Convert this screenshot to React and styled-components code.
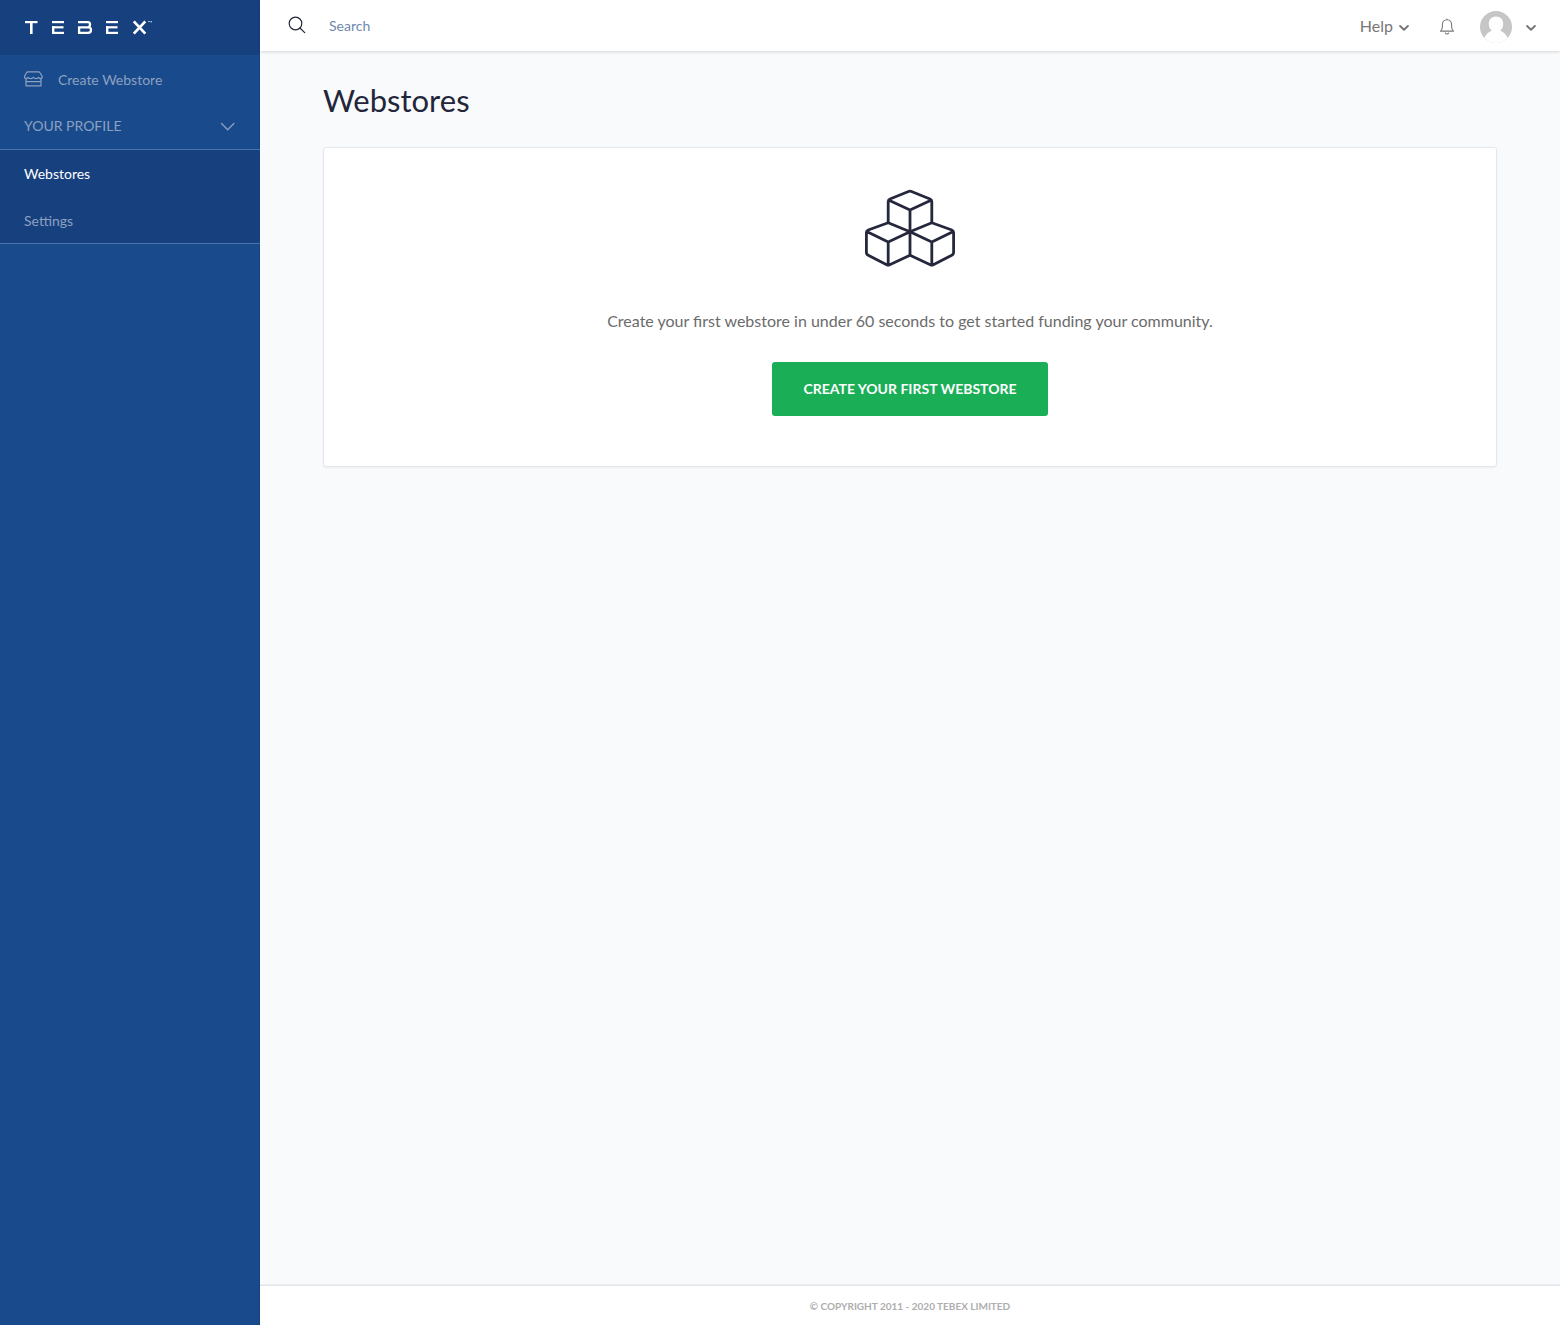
import React from "react";
import styled, { createGlobalStyle } from "styled-components";

const GlobalStyle = createGlobalStyle`
  *, *::before, *::after { box-sizing: border-box; }
  body {
    margin: 0;
    background: #f9fafc;
    color: #23263b;
    font-family: Lato, "Open Sans", sans-serif;
    font-size: 14px;
    line-height: 20px;
  }
  button, input { font: inherit; }
  svg { display: block; flex: none; }
`;

const Shell = styled.div`
  display: flex;
  min-height: 100vh;
`;

const Sidebar = styled.aside`
  flex: 0 0 260px;
  background: #194b8c;
  box-shadow: inset -1px 0 0 #17407f;
`;

const Brand = styled.a`
  display: flex;
  align-items: center;
  height: 55px;
  padding: 0 24px;
  background: #17407f;
`;

const SideLink = styled.a`
  display: flex;
  align-items: center;
  gap: 15px;
  height: ${(p) => (p.$primary ? 48 : 47)}px;
  padding: ${(p) => (p.$primary ? "2px 24px 0" : "0 24px")};
  color: ${(p) => (p.$active ? "#ffffff" : "#8ca0c0")};
  text-decoration: none;
`;

const GroupToggle = styled.button`
  display: flex;
  align-items: center;
  justify-content: space-between;
  width: 100%;
  height: 47px;
  padding: 0 24px;
  border: 0;
  border-bottom: 1px solid #4873aa;
  background: transparent;
  color: #8ca0c0;
  text-transform: uppercase;
  cursor: pointer;
`;

const SubMenu = styled.div`
  background: #17407f;
  box-shadow: inset 0 -1px 0 #4873aa;
`;

const Main = styled.div`
  display: flex;
  flex: 1;
  flex-direction: column;
  min-width: 0;
`;

const TopBar = styled.header`
  display: flex;
  align-items: center;
  justify-content: space-between;
  height: 51px;
  padding: 0 24px 0 28px;
  background: #ffffff;
  box-shadow: 0 1px 3px rgba(0, 0, 0, 0.15);
`;

const SearchForm = styled.form`
  display: flex;
  flex: 1;
  align-items: center;
  gap: 23px;
`;

const SearchInput = styled.input`
  flex: 1;
  min-width: 0;
  height: 50px;
  padding: 0;
  border: 0;
  outline: 0;
  background: transparent;
  color: #23263b;
  &::placeholder { color: #6e88ae; opacity: 1; }
`;

const Actions = styled.div`
  display: flex;
  align-items: center;
  padding-top: 2px;
`;

const ActionButton = styled.button`
  display: flex;
  align-items: center;
  gap: ${(p) => p.$gap || 0}px;
  padding: 0;
  margin-left: ${(p) => p.$space || 0}px;
  border: 0;
  background: transparent;
  color: #777777;
  font-size: 16px;
  line-height: 22px;
  cursor: pointer;
`;

const ActionLabel = styled.span`
  padding-bottom: 2px;
`;

const Content = styled.main`
  flex: 1;
  padding: 25px 63px 48px;
`;

const Title = styled.h1`
  margin: 0 0 23px;
  font-size: 31px;
  font-weight: 400;
  line-height: 48px;
`;

const Card = styled.section`
  display: flex;
  flex-direction: column;
  align-items: center;
  padding: 40px 24px 50px;
  border: 1px solid #e3e8ef;
  border-radius: 3px;
  background: #ffffff;
  box-shadow: 0 1px 2px rgba(0, 0, 0, 0.05);
`;

const Message = styled.p`
  margin: 41px 0 29px;
  color: #6b6b6b;
  font-size: 16px;
  line-height: 24px;
  text-align: center;
`;

const PrimaryButton = styled.button`
  padding: 17px 31px;
  border: 0;
  border-radius: 3px;
  background: #1aae57;
  color: #ffffff;
  font-weight: 700;
  text-transform: uppercase;
  cursor: pointer;
`;

const Footer = styled.footer`
  padding: 10px 24px 9px;
  border-top: 1px solid #e0e5eb;
  background: #ffffff;
  box-shadow: 0 -1px 1px rgba(0, 0, 0, 0.04);
  color: #adadad;
  font-size: 10px;
  font-weight: 700;
  text-align: center;
  text-transform: uppercase;
`;

const TebexLogo = () => (
  <svg width="130" height="15" viewBox="0 0 130 15" fill="#fff" role="img" aria-label="Tebex">
    <rect x="1" y="1" width="12.500" height="2.200" />
    <rect x="6" y="1" width="2.600" height="13" />
    {[28, 82].map((x) => (
      <g key={x}>
        <rect x={x} y="1" width="12" height="2.200" />
        <rect x={x} y="6.200" width="11.500" height="2.200" />
        <rect x={x} y="11.800" width="12" height="2.200" />
        <rect x={x} y="6.200" width="2.400" height="7.800" />
      </g>
    ))}
    <g fill="none" stroke="#fff" strokeWidth="2.300">
      <path d="M54 2.100H64Q66 2.100 66 4.500T64 7.300H55.100V12.900H64Q67 12.900 67 10T64 7.300" />
      <path strokeWidth="2.700" d="M109.800 1.300L121.300 13.700M121.300 1.300L109.800 13.700" />
    </g>
    <g fillOpacity=".6">
      <rect x="124" y="1" width="2" height="1" />
      <rect x="126.500" y="1" width="1.500" height="1.500" />
    </g>
  </svg>
);

const StoreIcon = () => (
  <svg width="19" height="18" viewBox="0 0 19 18" fill="none" stroke="currentColor" strokeWidth="1.200" strokeLinejoin="round" aria-hidden="true">
    <path d="M4 .8h10.500c.7 0 1.200.3 1.500.9l2.100 3.600c.4 1.300-.4 2.300-1.600 2.300-1.100 0-1.700-.6-2-1.300-.4.800-1.200 1.300-2.500 1.300-1.300 0-2.200-.5-2.700-1.300-.5.800-1.400 1.300-2.700 1.300-1.200 0-2.100-.5-2.500-1.300-.3.700-.9 1.300-1.900 1.300C1 7.600.2 6.600.6 5.300l1.900-3.600C2.800 1.100 3.300.8 4 .8z" />
    <path d="M2 7.600v7.200h15V7.600M2 10.600h15" />
  </svg>
);

const GroupChevron = () => (
  <svg width="16" height="9" viewBox="0 0 16 9" fill="none" stroke="currentColor" strokeWidth="1.300" strokeLinecap="round" strokeLinejoin="round" aria-hidden="true">
    <path d="M1.500 1.500L7.700 7.800l6.200-6.300" />
  </svg>
);

const MenuChevron = () => (
  <svg width="10" height="10" viewBox="0 0 10 10" fill="none" stroke="currentColor" strokeWidth="1.900" strokeLinecap="round" strokeLinejoin="round" aria-hidden="true">
    <path d="M1.100 4l3.900 3.800L8.900 4" />
  </svg>
);

const SearchIcon = () => (
  <svg width="18" height="20" viewBox="0 0 18 20" fill="none" stroke="#23263b" strokeWidth="1.200" strokeLinecap="round" aria-hidden="true">
    <circle cx="7.500" cy="7.500" r="6.300" />
    <path d="M12 12l4.700 4.600" />
  </svg>
);

const BellIcon = () => (
  <svg width="16" height="18" viewBox="0 0 16 18" fill="none" stroke="currentColor" strokeWidth="1.100" strokeLinecap="round" strokeLinejoin="round" aria-hidden="true">
    <path d="M8 1.700V1M1.500 13.100c1.300-1 1.900-2.200 1.900-4.300V6.600c0-2.900 1.800-4.900 4.600-4.900s4.600 2 4.600 4.900v2.200c0 2.100.6 3.300 1.900 4.300zM6.400 15c.6 1.300 2.600 1.300 3.200 0" />
  </svg>
);

const Avatar = () => (
  <svg width="32" height="32" viewBox="0 0 32 32" aria-hidden="true">
    <defs>
      <clipPath id="avatar-round"><circle cx="16" cy="16" r="16" /></clipPath>
    </defs>
    <g clipPath="url(#avatar-round)">
      <rect width="32" height="32" fill="#c6c6c6" />
      <path fill="#fff" d="M16 5.500c-4.300 0-7.200 2.900-7.200 7.200 0 3.100 1.200 5.600 3.200 7.100-3.500 1-6.300 3.600-7.700 7.200V32h23.400v-5c-1.400-3.600-4.200-6.200-7.700-7.200 2-1.500 3.200-4 3.200-7.100 0-4.300-2.900-7.200-7.200-7.200z" />
    </g>
  </svg>
);

const CubesIcon = () => (
  <svg width="92" height="80" viewBox="0 0 92 80" fill="none" stroke="#25283d" strokeWidth="2.800" strokeLinejoin="round" strokeLinecap="round" aria-hidden="true">
    <path d="M24.200 34.700V13.500q0-1.800 1.800-2.500l18.500-7.500q1.500-.6 3 0L66 11q1.800.7 1.800 2.500v21.200M25 12.300l21 9.700 21-9.700M46 22v21.700" />
    <path d="M46 43.700l-21.800-9L4.200 42q-1.800.7-1.800 2.500v20q0 1.800 1.800 2.700l18.500 9.600q1.500.8 3 0L46 67.300V43.700M3.200 43.700l21 10.300L46 43.700M24.200 54v23" />
    <path d="M46 43.700l21.800-9 20 7.300q1.800.7 1.800 2.500v20q0 1.800-1.800 2.700l-18.500 9.600q-1.500.8-3 0L46 67.300M46 43.700L67.800 54l21-10.300M67.800 54v23" />
  </svg>
);

export default function App() {
  return (
    <>
      <GlobalStyle />
      <Shell>
        <Sidebar>
          <Brand href="#home"><TebexLogo /></Brand>
          <nav aria-label="Main">
            <SideLink href="#create" $primary><StoreIcon />Create Webstore</SideLink>
            <GroupToggle type="button" aria-expanded="true">
              Your Profile
              <GroupChevron />
            </GroupToggle>
            <SubMenu>
              <SideLink href="#webstores" $active aria-current="page">Webstores</SideLink>
              <SideLink href="#settings">Settings</SideLink>
            </SubMenu>
          </nav>
        </Sidebar>
        <Main>
          <TopBar>
            <SearchForm role="search">
              <label htmlFor="search" aria-label="Search"><SearchIcon /></label>
              <SearchInput id="search" type="text" placeholder="Search" />
            </SearchForm>
            <Actions>
              <ActionButton type="button" $gap={6}><ActionLabel>Help</ActionLabel><MenuChevron /></ActionButton>
              <ActionButton type="button" aria-label="Notifications" $space={30}><BellIcon /></ActionButton>
              <ActionButton type="button" aria-label="Account" $gap={14} $space={25}><Avatar /><MenuChevron /></ActionButton>
            </Actions>
          </TopBar>
          <Content>
            <Title>Webstores</Title>
            <Card>
              <CubesIcon />
              <Message>Create your first webstore in under 60 seconds to get started funding your community.</Message>
              <PrimaryButton type="button">Create your first webstore</PrimaryButton>
            </Card>
          </Content>
          <Footer>© Copyright 2011 - 2020 Tebex Limited</Footer>
        </Main>
      </Shell>
    </>
  );
}
